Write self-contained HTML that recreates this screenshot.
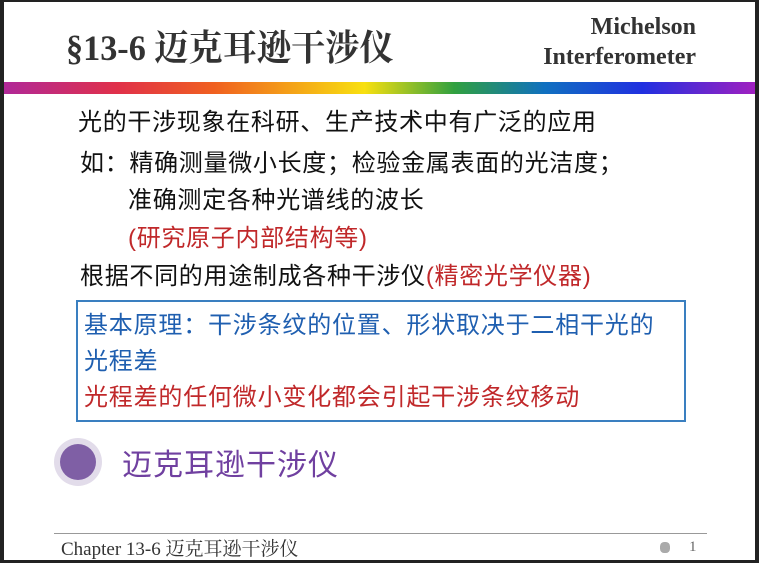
<!DOCTYPE html>
<html><head><meta charset="utf-8"><style>
body{margin:0;width:759px;height:563px;background:#222;position:relative;overflow:hidden;font-family:"Liberation Sans","Noto Sans CJK SC",sans-serif}
#s{position:absolute;left:4px;top:2px;width:751px;height:558px;background:#fff}
.a{position:absolute;white-space:nowrap}
.t{font-size:24px;letter-spacing:0.7px;color:#111;line-height:30px}
.r,.t.r{color:#c0282a}
</style></head><body>
<div id="s">
<div class="a" style="left:62px;top:18px;font-family:'Liberation Serif','Noto Serif CJK SC',serif;font-weight:bold;font-size:36px;color:#333;transform:scaleX(0.95);transform-origin:left">§13-6 迈克耳逊干涉仪</div>
<div class="a" style="left:480px;top:10px;width:212px;text-align:right;font-family:'Liberation Serif',serif;font-weight:bold;font-size:24px;line-height:30px;color:#333">Michelson<br>Interferometer</div>
<div class="a" style="left:0;top:80px;width:751px;height:12px;background:linear-gradient(90deg,#b02898 0%,#e0304a 15%,#f06020 28%,#f8e010 48%,#30a040 60%,#1070c0 72%,#2030e0 85%,#a020c0 100%)"></div>
<div class="a t" style="left:74px;top:106px">光的干涉现象在科研、生产技术中有广泛的应用</div>
<div class="a t" style="left:76px;top:147px">如：精确测量微小长度；检验金属表面的光洁度；</div>
<div class="a t" style="left:124px;top:184px">准确测定各种光谱线的波长</div>
<div class="a t r" style="left:124px;top:222px">(研究原子内部结构等)</div>
<div class="a t" style="left:76px;top:260px">根据不同的用途制成各种干涉仪<span class="r">(精密光学仪器)</span></div>
<div class="a" style="left:72px;top:298px;width:610px;height:122px;border:2px solid #3a7fc0;box-sizing:border-box"></div>
<div class="a" style="left:80px;top:306px;font-size:24px;letter-spacing:0.8px;line-height:36px;color:#1f5fb0">基本原理：干涉条纹的位置、形状取决于二相干光的<br>光程差<br><span class="r">光程差的任何微小变化都会引起干涉条纹移动</span></div>
<div class="a" style="left:50px;top:436px;width:48px;height:48px;border-radius:50%;background:#e2dcea"></div>
<div class="a" style="left:56px;top:442px;width:36px;height:36px;border-radius:50%;background:#7f5fa5"></div>
<div class="a" style="left:118px;top:438px;font-size:30px;letter-spacing:1px;color:#7040a0">迈克耳逊干涉仪</div>
<div class="a" style="left:50px;top:531px;width:653px;height:1px;background:#999"></div>
<div class="a" style="left:57px;top:537px;font-family:'Liberation Serif','Noto Serif CJK SC',serif;font-size:19px;line-height:22px;color:#333">Chapter 13-6 迈克耳逊干涉仪</div>
<div class="a" style="left:656px;top:540px;width:10px;height:11px;border-radius:40%;background:#aaa"></div>
<div class="a" style="left:685px;top:537px;font-family:'Liberation Serif',serif;font-size:15px;color:#666">1</div>
</div>
</body></html>
